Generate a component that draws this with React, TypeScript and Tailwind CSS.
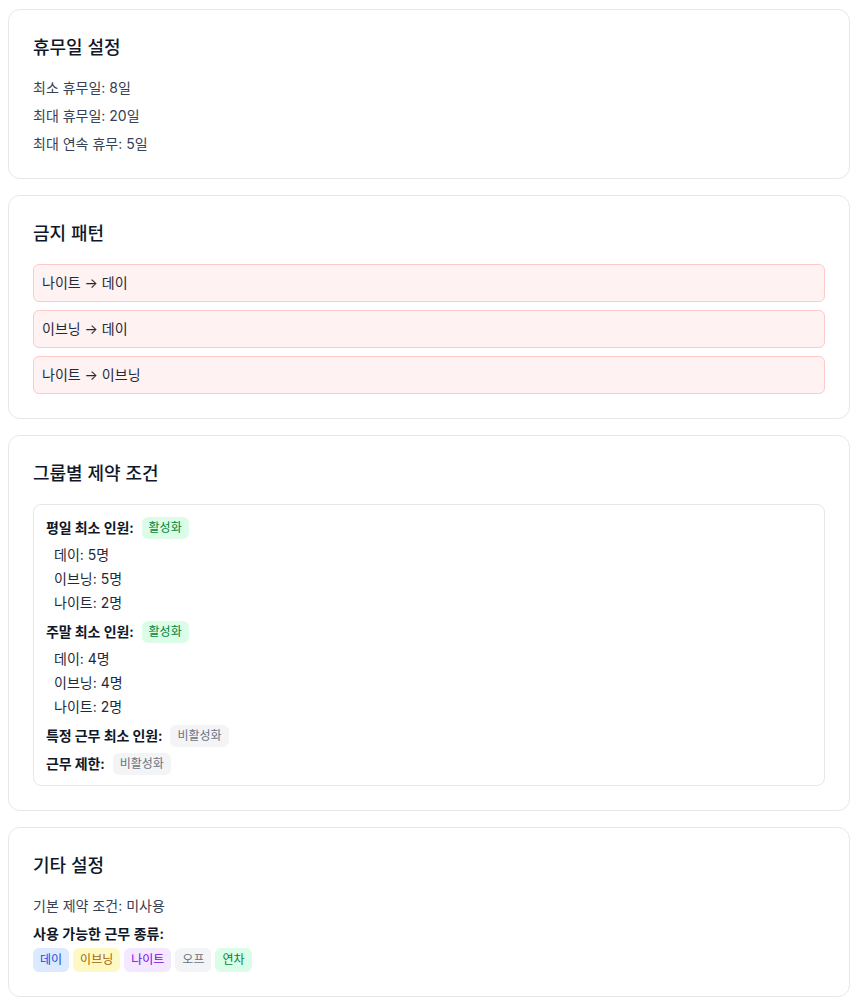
import React from 'react';

type Shift = { label: string; count: number };

const weekday: Shift[] = [
  { label: '데이', count: 5 },
  { label: '이브닝', count: 5 },
  { label: '나이트', count: 2 },
];

const weekend: Shift[] = [
  { label: '데이', count: 4 },
  { label: '이브닝', count: 4 },
  { label: '나이트', count: 2 },
];

const patterns = ['나이트 → 데이', '이브닝 → 데이', '나이트 → 이브닝'];

const shiftTypes = [
  { label: '데이', cls: 'bg-blue-100 text-blue-700' },
  { label: '이브닝', cls: 'bg-yellow-100 text-yellow-700' },
  { label: '나이트', cls: 'bg-purple-100 text-purple-700' },
  { label: '오프', cls: 'bg-gray-100 text-gray-500' },
  { label: '연차', cls: 'bg-green-100 text-green-700' },
];

function Card({ title, children }: { title: string; children: React.ReactNode }) {
  return (
    <section className="bg-white border border-gray-200 rounded-xl p-6">
      <h2 className="text-lg leading-7 font-medium text-gray-900 mb-4">{title}</h2>
      {children}
    </section>
  );
}

function Badge({ on }: { on: boolean }) {
  return on ? (
    <span className="px-[7px] h-[22px] leading-[22px] text-xs rounded-md bg-green-100 text-green-700">활성화</span>
  ) : (
    <span className="px-[7px] h-[22px] leading-[22px] text-xs rounded-md bg-gray-100 text-gray-500">비활성화</span>
  );
}

function Rule({ label, on, shifts }: { label: string; on: boolean; shifts?: Shift[] }) {
  return (
    <div>
      <div className="flex items-center gap-2 h-[22px]">
        <span className="font-semibold text-gray-900 tracking-[-0.01em]">{label}</span>
        <Badge on={on} />
      </div>
      {shifts && (
        <ul className="mt-1 pl-2 leading-6 text-gray-800">
          {shifts.map(s => (
            <li key={s.label}>{s.label}: {s.count}명</li>
          ))}
        </ul>
      )}
    </div>
  );
}

export default function App() {
  return (
    <div
      className="px-2 pt-[9px] pb-2 space-y-4 bg-white text-sm text-gray-700"
      style={{ fontFamily: 'Inter, "Noto Sans CJK KR", sans-serif' }}
    >
      <Card title="휴무일 설정">
        <div className="space-y-2">
          <p>최소 휴무일: 8일</p>
          <p>최대 휴무일: 20일</p>
          <p>최대 연속 휴무: 5일</p>
        </div>
      </Card>

      <Card title="금지 패턴">
        <div className="space-y-2">
          {patterns.map(p => (
            <div key={p} className="p-2 bg-red-50 border border-red-200 rounded-md text-gray-800">
              {p}
            </div>
          ))}
        </div>
      </Card>

      <Card title="그룹별 제약 조건">
        <div className="border border-gray-200 rounded-lg px-3 pt-3 pb-2.5 flex flex-col gap-1.5">
          <Rule label="평일 최소 인원:" on shifts={weekday} />
          <Rule label="주말 최소 인원:" on shifts={weekend} />
          <Rule label="특정 근무 최소 인원:" on={false} />
          <Rule label="근무 제한:" on={false} />
        </div>
      </Card>

      <Card title="기타 설정">
        <p>기본 제약 조건: 미사용</p>
        <p className="mt-2 font-semibold text-gray-900">사용 가능한 근무 종류:</p>
        <div className="mt-1 flex gap-1">
          {shiftTypes.map(t => (
            <span key={t.label} className={`px-[7px] py-1 text-xs rounded-md ${t.cls}`}>
              {t.label}
            </span>
          ))}
        </div>
      </Card>
    </div>
  );
}
